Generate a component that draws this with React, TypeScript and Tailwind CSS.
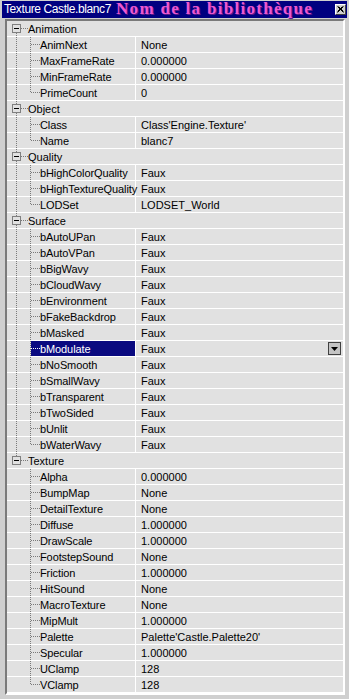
import React from "react";

type Item = [string, string];
type Category = { name: string; items: Item[] };

const categories: Category[] = [
  {
    name: "Animation",
    items: [
      ["AnimNext", "None"],
      ["MaxFrameRate", "0.000000"],
      ["MinFrameRate", "0.000000"],
      ["PrimeCount", "0"],
    ],
  },
  {
    name: "Object",
    items: [
      ["Class", "Class'Engine.Texture'"],
      ["Name", "blanc7"],
    ],
  },
  {
    name: "Quality",
    items: [
      ["bHighColorQuality", "Faux"],
      ["bHighTextureQuality", "Faux"],
      ["LODSet", "LODSET_World"],
    ],
  },
  {
    name: "Surface",
    items: [
      ["bAutoUPan", "Faux"],
      ["bAutoVPan", "Faux"],
      ["bBigWavy", "Faux"],
      ["bCloudWavy", "Faux"],
      ["bEnvironment", "Faux"],
      ["bFakeBackdrop", "Faux"],
      ["bMasked", "Faux"],
      ["bModulate", "Faux"],
      ["bNoSmooth", "Faux"],
      ["bSmallWavy", "Faux"],
      ["bTransparent", "Faux"],
      ["bTwoSided", "Faux"],
      ["bUnlit", "Faux"],
      ["bWaterWavy", "Faux"],
    ],
  },
  {
    name: "Texture",
    items: [
      ["Alpha", "0.000000"],
      ["BumpMap", "None"],
      ["DetailTexture", "None"],
      ["Diffuse", "1.000000"],
      ["DrawScale", "1.000000"],
      ["FootstepSound", "None"],
      ["Friction", "1.000000"],
      ["HitSound", "None"],
      ["MacroTexture", "None"],
      ["MipMult", "1.000000"],
      ["Palette", "Palette'Castle.Palette20'"],
      ["Specular", "1.000000"],
      ["UClamp", "128"],
      ["VClamp", "128"],
    ],
  },
];

const DOT = "#7a7a7a";

// tree connector for a category row
const CategoryGutter = ({ first, last }: { first: boolean; last: boolean }) => (
  <svg width="21" height="15" className="shrink-0">
    {!first && <line x1="9.5" y1="0" x2="9.5" y2="3" stroke={DOT} strokeDasharray="1 1" />}
    {!last && <line x1="9.5" y1="12" x2="9.5" y2="15" stroke={DOT} strokeDasharray="1 1" />}
    <line x1="14" y1="7.5" x2="21" y2="7.5" stroke={DOT} strokeDasharray="1 1" />
    <rect x="5.5" y="3.5" width="8" height="8" fill="#e1e1e1" stroke="#808080" />
    <line x1="7" y1="7.5" x2="12" y2="7.5" stroke="#000" />
  </svg>
);

// tree connector for a child row
const ChildGutter = ({ parentLast, last }: { parentLast: boolean; last: boolean }) => (
  <svg width="24" height="15" className="shrink-0">
    {!parentLast && <line x1="9.5" y1="0" x2="9.5" y2="15" stroke={DOT} strokeDasharray="1 1" />}
    <line x1="23.5" y1="0" x2="23.5" y2={last ? 8 : 15} stroke={DOT} strokeDasharray="1 1" />
  </svg>
);

export default function App() {
  return (
    <div
      className="w-[349px] h-[699px] bg-[#cfcfcf] pt-[1px] px-[2px] overflow-hidden flex flex-col"
      style={{ fontFamily: '"Liberation Sans", Arial, sans-serif' }}
    >
      {/* Title bar */}
      <div className="h-[17px] bg-[#000080] flex items-start shrink-0">
        <span className="text-white text-[12px] leading-[17px] tracking-[-0.4px] pl-[2px] whitespace-nowrap">Texture Castle.blanc7</span>
        <span
          className="ml-[5px] text-[17px] leading-[16px] font-bold tracking-[1.3px] text-[#ec58d2] whitespace-nowrap"
          style={{ fontFamily: '"Liberation Serif", serif', textShadow: "1px 1px 0 #5a1a8a" }}
        >
          Nom de la bibliothèque
        </span>
        <div className="ml-auto mr-[1px] mt-[3px] w-[11px] h-[11px] bg-[#cfcfcf] border border-t-white border-l-white border-r-[#404040] border-b-[#404040] flex items-center justify-center">
          <svg width="7" height="7" viewBox="0 0 7 7">
            <path d="M0.5 0.5 L6.5 6.5 M6.5 0.5 L0.5 6.5 M1.5 0.5 L6.5 5.5 M5.5 0.5 L0.5 5.5" stroke="#000" strokeWidth="1" />
          </svg>
        </div>
      </div>

      {/* Property grid */}
      <div className="ml-[3px] mr-[2px] mt-[1px] border-2 border-t-[#7a7a7a] border-l-[#7a7a7a] border-r-white border-b-white bg-[#e1e1e1] text-[11px] leading-[17px] text-black">
        {categories.map((cat, ci) => {
          const catLast = ci === categories.length - 1;
          return (
            <div key={cat.name}>
              <div className="h-[16px] flex border-b border-white">
                <CategoryGutter first={ci === 0} last={catLast} />
                <span className="whitespace-nowrap">{cat.name}</span>
              </div>
              {cat.items.map(([name, value], ii) => {
                const selected = name === "bModulate";
                const last = ii === cat.items.length - 1;
                return (
                  <div key={name} className="h-[16px] flex border-b border-white">
                    <div className="w-[129px] shrink-0 flex border-r border-white">
                      <ChildGutter parentLast={catLast} last={last} />
                      <div className={`flex-1 min-w-0 flex items-start ${selected ? "bg-[#0a0a80] text-white" : ""}`}>
                        <svg width="9" height="15" className="shrink-0">
                          <line x1="0" y1="7.5" x2="9" y2="7.5" stroke={selected ? "#fff" : DOT} strokeDasharray="1 1" />
                        </svg>
                        <span className="whitespace-nowrap tracking-[-0.1px]">{name}</span>
                      </div>
                    </div>
                    <div className="flex-1 flex items-start pl-[5px] pr-[2px]">
                      <span className="whitespace-nowrap">{value}</span>
                      {selected && (
                        <div className="ml-auto mt-[1px] w-[13px] h-[13px] bg-[#c4c4c4] border border-[#404040] flex items-center justify-center">
                          <svg width="7" height="4" viewBox="0 0 7 4">
                            <path d="M0 0 H7 L3.5 4 Z" fill="#000" />
                          </svg>
                        </div>
                      )}
                    </div>
                  </div>
                );
              })}
            </div>
          );
        })}
      </div>
    </div>
  );
}
